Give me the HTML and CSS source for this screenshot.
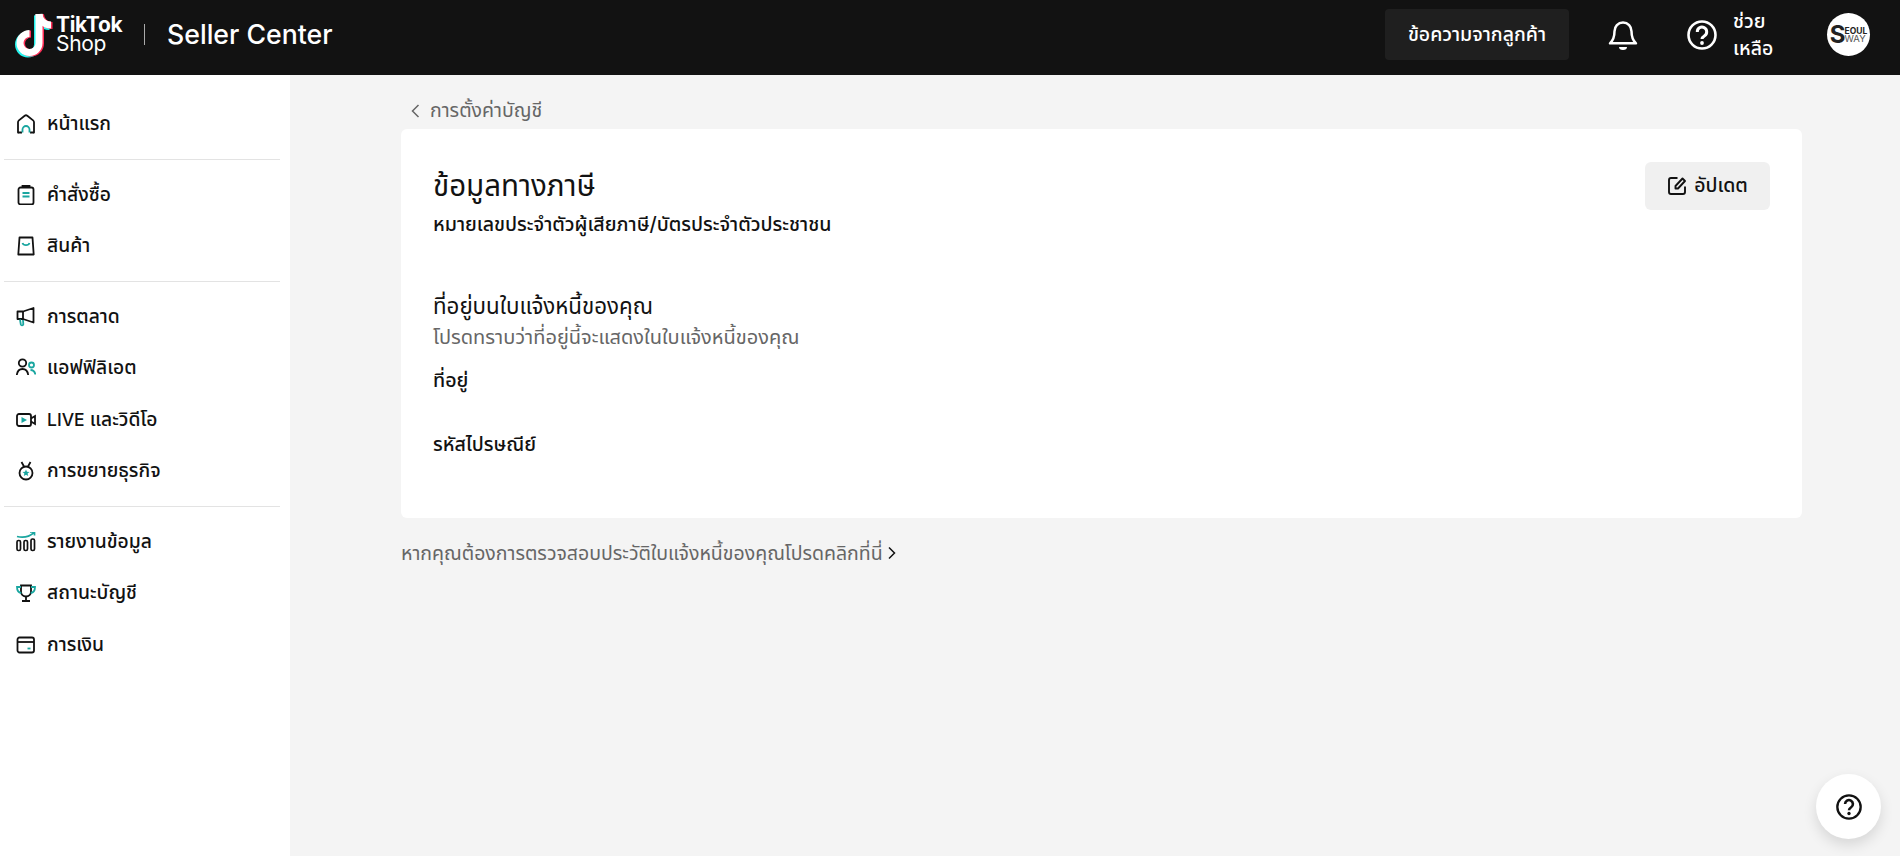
FILE: index.html
```html
<!DOCTYPE html>
<html lang="th">
<head>
<meta charset="utf-8">
<title>Seller Center</title>
<link rel="stylesheet" href="styles.css">
</head>
<body>
<header class="topbar">
  <div class="brand">
    <svg class="brand-note" width="40" height="46" viewBox="0 0 40 46" fill="none">
      <g stroke-width="7" fill="none">
        <g stroke="#25f4ee" transform="translate(-1.500 1.500)">
          <path d="M24 2v29a9.500 9.500 0 1 1-9.500-9.500"/>
          <path d="M24 2c.3 6 5 11 12 11"/>
        </g>
        <g stroke="#fe2c55" transform="translate(1.500 .5)">
          <path d="M24 2v29a9.500 9.500 0 1 1-9.500-9.500"/>
          <path d="M24 2c.3 6 5 11 12 11"/>
        </g>
        <g stroke="#fff">
          <path d="M24 2v29a9.500 9.500 0 1 1-9.500-9.500"/>
          <path d="M24 2c.3 6 5 11 12 11"/>
        </g>
      </g>
    </svg>
    <div class="brand-words">
      <span class="brand-tiktok">TikTok</span>
      <span class="brand-shop">Shop</span>
    </div>
    <span class="brand-sep"></span>
    <span class="brand-title">Seller Center</span>
  </div>
  <div class="top-actions">
    <button class="msg-btn">ข้อความจากลูกค้า</button>
    <svg class="bell" width="30" height="32" viewBox="0 0 30 32" fill="none" stroke="#fff" stroke-width="2.500" stroke-linejoin="round">
      <path d="M15 3.500c-5 0-8.500 3.800-8.500 8.800 0 6-1.200 9-4.500 12h26c-3.300-3-4.500-6-4.500-12 0-5-3.500-8.800-8.500-8.800z"/>
      <path d="M11 28h8a4 3 0 0 1-8 0z" fill="#fff" stroke="none"/>
    </svg>
    <div class="help">
      <svg width="30" height="30" viewBox="0 0 30 30" fill="none" stroke="#fff" stroke-width="2.600">
        <circle cx="15" cy="15" r="13.500"/>
        <path d="M10.300 12a4.700 4.700 0 1 1 7.300 3.700c-1.700 1.100-2.600 1.800-2.600 3.300" stroke-width="3"/>
        <circle cx="15" cy="23" r="1.900" fill="#fff" stroke="none"/>
      </svg>
      <span class="help-text">ช่วยเหลือ</span>
    </div>
    <div class="avatar"><span class="avatar-s">S</span><span class="avatar-rest"><b>EOUL</b><i>WAY</i></span></div>
  </div>
</header>
<div class="shell">
  <nav class="sidebar">
    <div class="nav-group">
      <a class="nav-item">
        <svg class="nav-icon" viewBox="0 0 20 20" fill="none" stroke="#121212" stroke-width="1.800"><path d="M2 18.500V8.200c0-.8.300-1.300.9-1.800L8.700 1.700c.8-.6 1.800-.6 2.600 0l5.800 4.700c.6.5.9 1 .9 1.800v10.300" stroke-linecap="round"/><path d="M2 18.500h4M14 18.500h4"/><path d="M6.500 18.500v-3a3.500 3.500 0 0 1 7 0v3" stroke="#1aa6a0"/></svg>
        <span>หน้าแรก</span>
      </a>
    </div>
    <div class="nav-group">
      <a class="nav-item">
        <svg class="nav-icon" viewBox="0 0 20 20" fill="none" stroke="#121212" stroke-width="1.800"><rect x="2.500" y="2.500" width="15" height="17" rx="2"/><path d="M6.500 2.500V1h7v1.500"/><path d="M6.500 8h7M6.500 11.500h7" stroke="#1aa6a0" stroke-width="1.800"/></svg>
        <span>คำสั่งซื้อ</span>
      </a>
      <a class="nav-item">
        <svg class="nav-icon" viewBox="0 0 20 20" fill="none" stroke="#121212" stroke-width="1.800"><path d="M3.500 1.500h13l1.200 17H2.300z" stroke-linejoin="round"/><path d="M6.500 7c1 2.800 6 2.800 7 0" stroke="#1aa6a0"/></svg>
        <span>สินค้า</span>
      </a>
    </div>
    <div class="nav-group">
      <a class="nav-item">
        <svg class="nav-icon" viewBox="0 0 20 20" fill="none" stroke="#121212" stroke-width="1.800"><path d="M7 4.500H1.500v7.500H7l10.500 3.500V1z" stroke-linejoin="round"/><path d="M7 4.500V12"/><path d="M4 12.500l.8 5a1.300 1.300 0 0 0 2.500-.2L7 13" stroke="#1aa6a0"/></svg>
        <span>การตลาด</span>
      </a>
      <a class="nav-item">
        <svg class="nav-icon" viewBox="0 0 20 20" fill="none" stroke="#121212" stroke-width="1.800"><circle cx="6.500" cy="5" r="3.700"/><path d="M.8 17c.5-4 2.700-6 5.700-6s5.200 2 5.700 6"/><circle cx="15.500" cy="7" r="2.500" stroke="#1aa6a0"/><path d="M14.500 12c3 .2 4.500 1.800 4.800 4.500" stroke="#1aa6a0"/></svg>
        <span>แอฟฟิลิเอต</span>
      </a>
      <a class="nav-item">
        <svg class="nav-icon" viewBox="0 0 20 20" fill="none" stroke="#121212" stroke-width="1.800"><rect x="1" y="4" width="14" height="12" rx="2"/><path d="M15 8.500l4-2.500v8l-4-2.500"/><path d="M5.500 7l5.500 3-5.500 3z" fill="#1aa6a0" stroke="none"/></svg>
        <span><span class="latin">LIVE</span> และวิดีโอ</span>
      </a>
      <a class="nav-item">
        <svg class="nav-icon" viewBox="0 0 20 20" fill="none" stroke="#121212" stroke-width="1.800"><circle cx="10" cy="12" r="6.500"/><path d="M5.500 1L8 5.500M14.500 1L12 5.500"/><path d="M10 8.500l1 2.300 2.500.2-1.900 1.600.6 2.400-2.200-1.300-2.200 1.300.6-2.400-1.900-1.600 2.500-.2z" fill="#1aa6a0" stroke="none"/></svg>
        <span>การขยายธุรกิจ</span>
      </a>
    </div>
    <div class="nav-group nav-group-last">
      <a class="nav-item">
        <svg class="nav-icon" viewBox="0 0 20 20" fill="none" stroke="#121212" stroke-width="1.700"><rect x="1" y="8.500" width="3.500" height="10" rx="1.500"/><rect x="8" y="8.500" width="3.500" height="10" rx="1.500"/><rect x="15" y="7" width="3.500" height="11.500" rx="1.500"/><path d="M1 4.500c6 1.500 12 .5 17-4M14 0h4.500v3.500" stroke="#1aa6a0"/></svg>
        <span>รายงานข้อมูล</span>
      </a>
      <a class="nav-item">
        <svg class="nav-icon" viewBox="0 0 20 20" fill="none" stroke="#121212" stroke-width="1.800"><path d="M5 2.500h10v6a5 5 0 0 1-10 0z"/><path d="M10 13.500v4M6 18h8"/><path d="M5 4H1c0 3.500 1 5.500 4.300 6M15 4h4c0 3.500-1 5.500-4.300 6" stroke="#1aa6a0"/></svg>
        <span>สถานะบัญชี</span>
      </a>
      <a class="nav-item">
        <svg class="nav-icon" viewBox="0 0 20 20" fill="none" stroke="#121212" stroke-width="1.800"><rect x="1.500" y="2.500" width="16.500" height="15" rx="2"/><path d="M1.500 7h16.500"/><path d="M11.500 13.500h3" stroke="#1aa6a0"/></svg>
        <span>การเงิน</span>
      </a>
    </div>
  </nav>
  <main class="content">
    <a class="back-link">
      <svg width="16" height="16" viewBox="0 0 16 16" fill="none" stroke="#666" stroke-width="1.500"><path d="M10.500 2L4.500 8l6 6"/></svg>
      <span>การตั้งค่าบัญชี</span>
    </a>
    <section class="card">
      <div class="card-head">
        <div>
          <h1 class="card-title">ข้อมูลทางภาษี</h1>
          <p class="field-label tax-id">หมายเลขประจำตัวผู้เสียภาษี/บัตรประจำตัวประชาชน</p>
        </div>
        <button class="update-btn">
          <svg width="20" height="20" viewBox="0 0 20 20" fill="none" stroke="#121212" stroke-width="1.900"><path d="M18 10.500v5.500a2 2 0 0 1-2 2H4a2 2 0 0 1-2-2V4a2 2 0 0 1 2-2h6.500"/><path d="M15.500 2.500l2.500 2.500-7 7.500H8.500V10z" stroke-linejoin="round"/></svg>
          <span>อัปเดต</span>
        </button>
      </div>
      <h2 class="section-title">ที่อยู่บนใบแจ้งหนี้ของคุณ</h2>
      <p class="section-note">โปรดทราบว่าที่อยู่นี้จะแสดงในใบแจ้งหนี้ของคุณ</p>
      <p class="field-label field-address">ที่อยู่</p>
      <p class="field-label field-zip">รหัสไปรษณีย์</p>
    </section>
    <a class="history-link">
      <span>หากคุณต้องการตรวจสอบประวัติใบแจ้งหนี้ของคุณโปรดคลิกที่นี่</span>
      <svg width="12" height="14" viewBox="0 0 12 14" fill="none" stroke="#121212" stroke-width="1.500"><path d="M3 1.500L8.500 7 3 12.500"/></svg>
    </a>
  </main>
</div>
<button class="float-help">
  <svg width="28" height="28" viewBox="0 0 30 30" fill="none" stroke="#121212" stroke-width="2.500">
    <circle cx="15" cy="15" r="12.500"/>
    <path d="M10.800 11.800a4.200 4.200 0 1 1 6.500 3.500c-1.500 1-2.300 1.700-2.300 3.200" stroke-width="2.800"/>
    <circle cx="15" cy="22" r="1.800" fill="#121212" stroke="none"/>
  </svg>
</button>
</body>
</html>
```

FILE: styles.css
```css
* { box-sizing: border-box; }
html, body { margin: 0; height: 100%; overflow: hidden; }
body {
  font-family: Inter, "Noto Sans", "Noto Sans Thai", sans-serif;
  color: #121212;
  background: #f4f4f4;
}
.topbar {
  height: 75px;
  background: #121212;
  display: flex;
  align-items: center;
  justify-content: space-between;
  padding: 0 30px 6px 15px;
}
.brand { display: flex; align-items: center; color: #fff; }
.brand-note { margin-right: 1px; }
.brand-words { display: flex; flex-direction: column; width: 88px; }
.brand-tiktok { font-size: 21px; font-weight: 700; line-height: 18px; letter-spacing: -.3px; }
.brand-shop { font-size: 21px; font-weight: 400; line-height: 20px; letter-spacing: -.3px; }
.brand-sep { width: 1px; height: 21px; background: #aaa; margin-right: 22px; }
.brand-title { font-size: 26.700px; font-weight: 500; padding-bottom: 2px; }
.top-actions { display: flex; align-items: center; }
.msg-btn {
  width: 184px;
  height: 51px;
  background: #1f1f1f;
  color: #fff;
  border: 0;
  border-radius: 4px;
  font: inherit;
  font-size: 19.500px;
  font-weight: 500;
  margin-right: 39px;
}
.bell { margin-right: 49px; }
.help { display: flex; align-items: center; gap: 16px; margin-right: 46px; }
.help-text { width: 48px; color: #fff; font-size: 19.500px; font-weight: 500; line-height: 27px; }
.avatar {
  width: 43px;
  height: 43px;
  border-radius: 50%;
  background: #fff;
  color: #222;
  display: flex;
  align-items: center;
  justify-content: center;
  overflow: hidden;
}
.avatar-s { font-size: 24px; font-weight: 700; line-height: 1; margin-right: -1px; }
.avatar-rest { display: flex; flex-direction: column; font-size: 8.500px; line-height: 8px; }
.avatar-rest b { font-weight: 700; }
.avatar-rest i { font-style: normal; font-size: 9.500px; color: #555; }
.shell { display: flex; height: 781px; }
.sidebar { width: 290px; background: #fff; padding-top: 14.500px; flex: none; }
.nav-group { margin: 0 0 0 4px; width: 276px; padding: 9px 0; border-bottom: 1px solid #e3e3e3; }
.nav-group-last { border-bottom: 0; }
.nav-item {
  display: flex;
  align-items: center;
  height: 51.500px;
  padding: 1px 0 0 12px;
  font-size: 19.300px;
  font-weight: 500;
  gap: 11px;
}
.latin { font-size: 17.500px; }
.nav-icon { width: 20px; height: 20px; flex: none; margin-top: -1px; }
.content { flex: 1; padding: 19px 98px 0 111px; }
.back-link {
  display: flex;
  align-items: center;
  gap: 6px;
  height: 35px;
  padding: 0 0 1px 7px;
  color: #666;
  font-size: 19.500px;
}
.card {
  background: #fff;
  border-radius: 6px;
  height: 389px;
  padding: 33px 32px;
}
.card-head { display: flex; justify-content: space-between; align-items: flex-start; }
.card-title { margin: 0; font-size: 29.500px; font-weight: 400; line-height: 46px; }
.field-label { margin: 0; font-size: 19.600px; font-weight: 500; line-height: 24px; }
.tax-id { margin-top: 4px; }
.update-btn {
  width: 125px;
  height: 48px;
  border: 0;
  border-radius: 6px;
  background: #f0f0f0;
  color: #121212;
  font: inherit;
  font-size: 19.500px;
  font-weight: 500;
  display: flex;
  align-items: center;
  justify-content: center;
  gap: 7px;
}
.section-title { margin: 51px 0 0; font-size: 22.300px; font-weight: 400; line-height: 38px; }
.section-note { margin: 0; color: #666; font-size: 20px; line-height: 24px; }
.field-address { margin-top: 19px; }
.field-zip { margin-top: 40px; }
.history-link {
  display: flex;
  align-items: center;
  gap: 3px;
  margin-top: 23px;
  color: #666;
  font-size: 19.500px;
  line-height: 24px;
}
.float-help {
  position: absolute;
  right: 19px;
  bottom: 17px;
  width: 65px;
  height: 65px;
  border: 0;
  border-radius: 50%;
  background: #fff;
  box-shadow: 0 6px 14px rgba(0,0,0,.12);
  display: flex;
  align-items: center;
  justify-content: center;
}
```
